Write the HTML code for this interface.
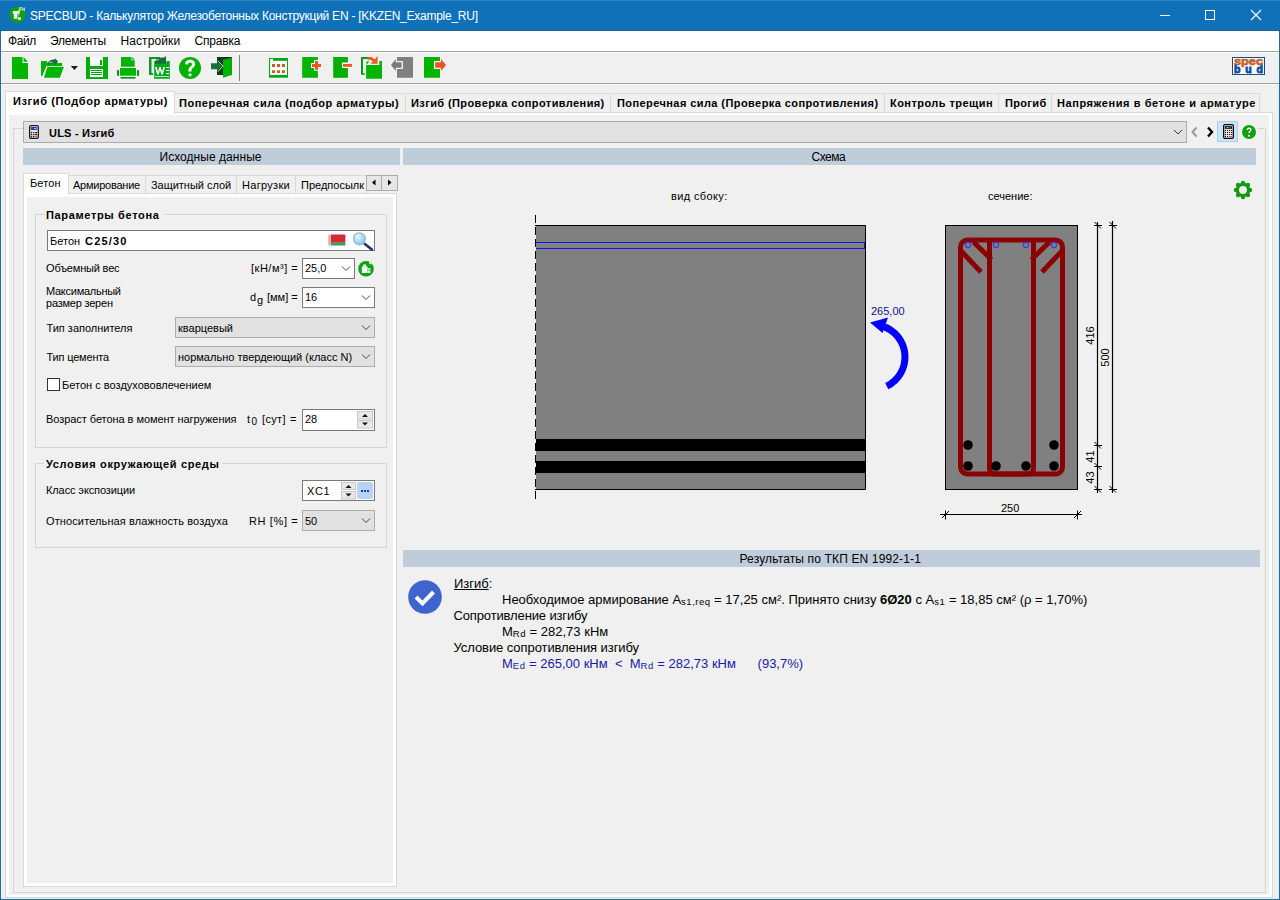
<!DOCTYPE html>
<html><head><meta charset="utf-8"><title>SPECBUD</title>
<style>
html,body{margin:0;padding:0;}
body{width:1280px;height:900px;position:relative;overflow:hidden;background:#f0f0f0;font-family:"Liberation Sans",sans-serif;color:#000;}
.r{position:absolute;}
.t{position:absolute;white-space:pre;}
</style></head><body>
<div class="r" style="left:0px;top:0px;width:1280px;height:900px;background:#f0f0f0;"></div>
<div class="r" style="left:0px;top:0px;width:1280px;height:31px;background:#0f72b9;"></div>
<div class="r" style="left:0px;top:0px;width:1280px;height:1px;background:#2a86c8;"></div>
<div class="r" style="left:0px;top:30px;width:1280px;height:1px;background:#1d5f92;"></div>
<div class="r" style="left:0px;top:31px;width:1px;height:869px;background:#2d6a96;"></div>
<div class="r" style="left:1279px;top:31px;width:1px;height:869px;background:#2d6a96;"></div>
<div class="r" style="left:0px;top:899px;width:1280px;height:1px;background:#2d6a96;"></div>
<div class="r" style="left:1px;top:898px;width:1278px;height:1px;background:#c8f4ff;"></div>
<div class="r" style="left:1px;top:31px;width:1px;height:867px;background:#e6fbff;"></div>
<div class="r" style="left:1278px;top:31px;width:1px;height:867px;background:#c8f4ff;"></div>
<svg class="r" style="left:8px;top:6px" width="19" height="19" viewBox="8 6 19 19">
<circle cx="17.25" cy="14.75" r="8" fill="#10a010"/>
<path d="M12.8 11.1H19.7V13.8H17.2V18.7H13.8V13.8H12.8Z" fill="#f0fff0"/>
<rect x="17.2" y="14" width="2" height="2.5" fill="#8fb08f"/>
<rect x="17.7" y="17.2" width="3.2" height="2.7" fill="#d8f8d8"/>
<path d="M18.6 11.2L20.4 9" stroke="#c8f4c8" stroke-width="1.2"/>
<path d="M19.6 10.8v-3.3h1.8M19.6 9.2h1.5M22.2 10.8v-3.3l2.2 3.3v-3.3" stroke="#b8f0c8" stroke-width="0.9" fill="none"/>
</svg>
<div class="t" style="left:30px;top:10px;font-size:12px;line-height:12px;color:#fff;letter-spacing:-0.250px;">SPECBUD - Калькулятор Железобетонных Конструкций EN - [KKZEN_Example_RU]</div>
<div class="r" style="left:1160px;top:15px;width:10px;height:1px;background:#fff;"></div>
<div class="r" style="left:1205px;top:10px;width:10px;height:10px;border:1px solid #fff;box-sizing:border-box;"></div>
<svg class="r" style="left:1250px;top:9px" width="12" height="12" viewBox="0 0 12 12">
<path d="M1 1L11 11M11 1L1 11" stroke="#fff" stroke-width="1.1"/></svg>
<div class="r" style="left:1px;top:31px;width:1278px;height:20px;background:#fff;"></div>
<div class="r" style="left:1px;top:51px;width:1278px;height:1px;background:#a0a0a0;"></div>
<div class="r" style="left:1px;top:52px;width:1278px;height:1px;background:#fcfcfc;"></div>
<div class="t" style="left:8px;top:35px;font-size:12px;line-height:12px;letter-spacing:-0.405px;">Файл</div>
<div class="t" style="left:50px;top:35px;font-size:12px;line-height:12px;letter-spacing:-0.197px;">Элементы</div>
<div class="t" style="left:120.5px;top:35px;font-size:12px;line-height:12px;letter-spacing:0.095px;">Настройки</div>
<div class="t" style="left:194.5px;top:35px;font-size:12px;line-height:12px;letter-spacing:-0.196px;">Справка</div>
<div class="r" style="left:1px;top:53px;width:1278px;height:30px;background:#f0f0f0;"></div>
<div class="r" style="left:1px;top:83px;width:1278px;height:1px;background:#a0a0a0;"></div>
<div class="r" style="left:1px;top:84px;width:1278px;height:1px;background:#fafafa;"></div>
<svg class="r" style="left:0;top:52px" width="460" height="32" viewBox="0 52 460 32">
<!-- new doc -->
<path d="M12 57h10.5v6h5.5v16h-16z" fill="#00b400"/>
<path d="M23.5 57l4.5 4.8h-4.5z" fill="#00b400"/>
<!-- open folder -->
<path d="M41 61h5.5l1.5 2h14v3h-15.5l-4.3 10h-1.2z" fill="#00b000"/>
<path d="M48 62.5c1.5-2.5 4-3.5 7-3v-1.3l3.2 3.3-3.2 3.6v-1.6c-2.6-0.6-5 0-7 1.5z" fill="#17703a"/>
<path d="M49 62.3h3.5" stroke="#c8f0c8" stroke-width="0.8"/>
<path d="M47.5 66.7h16.5l-4.2 11h-15.8z" fill="#00b400"/>
<path d="M70.8 66h7.2l-3.6 4z" fill="#1a1a1a"/>
<!-- save -->
<path d="M86 57h22v22h-22z" fill="#00b000"/>
<path d="M90 57h13v9h-13z" fill="#fff"/>
<path d="M100 60h2v5h-2z" fill="#00b000"/>
<path d="M90 69h13v8h-13z" fill="#fff"/>
<path d="M91 70h11v1h-11zM91 72h11v1h-11zM91 74h11v1h-11z" fill="#0a9a28"/>
<!-- print -->
<path d="M121 57h10.5l3.2 3.2v6.5h-13.7z" fill="#00b400"/>
<path d="M131.5 57l3.2 3.2h-3.2z" fill="#fff"/>
<path d="M132.2 57.2l2.3 2.3h-2.3z" fill="#00a000"/>
<path d="M120 68h16v7.7h-16z" fill="#00b400"/>
<path d="M117 70h1.8l0.4 5.7h-2.2zM137.3 70h1.8v5.7h-2.2z" fill="#0a8a20"/>
<path d="M120.2 77h15.7l-0.8 1.7h-14.1z" fill="#0a9a20"/>
<!-- word -->
<path d="M149 57h11v2h-8.5v14h1.5v2h-4z" fill="#0a9a20"/>
<path d="M154.2 61h2v1.5h-0.5v0.3h10.8v-1.8h3.3v17.7h-15.6z" fill="#00a820"/>
<path d="M155 62c1-3.5 4-5 9-4.5l2-1.5v7.7h-11z" fill="#17703a"/>
<path d="M156.8 61c0.3-1 1.2-1.6 2.2-1.4" stroke="#e0ffe0" stroke-width="0.7" fill="none"/>
<path d="M155 67.1h1.8l1.2 5 1.3-5h1.5l1.3 5 1.2-5h1.7l-2.1 7.5h-1.6l-1.3-4.8-1.3 4.8h-1.6z" fill="#fff"/>
<path d="M166.2 67h2.7v1h-2.7zM166.2 70h2.7v1h-2.7zM166.2 73h2.7v1h-2.7zM155 76.2h14v0.9h-14z" fill="#fff"/>
<!-- help -->
<circle cx="190" cy="67.9" r="11" fill="#00b000"/>
<path d="M185 64.3c0-2.9 2.2-4.6 5.1-4.6 3 0 5.1 1.8 5.1 4.3 0 3.4-3.7 3.6-3.7 6.6v0.8h-3.1v-1c0-3.9 3.6-4 3.6-6.2 0-1-0.8-1.7-1.9-1.7-1.2 0-2 0.9-2 2.1z" fill="#fff"/>
<path d="M190 72.9l2 1.9-2 1.9-2-1.9z" fill="#fff"/>
<!-- exit -->
<path d="M217 57h14.8v18h-14.8z" fill="#0b3a1c"/>
<path d="M223 59.7l8.8-2v17.3l-8.8 2.7z" fill="#00b400"/>
<path d="M211 63.2h6v-1.5l5 4.5-5 4.5v-1.5h-6z" fill="#17733a"/>
<path d="M217.8 60.8l5.2 5.4-5.2 5.4" fill="none" stroke="#e6ffe6" stroke-width="0.9"/>
<!-- separator -->
<path d="M239 55h1v26h-1z" fill="#808080"/>
<!-- calendar -->
<path d="M269 58h19v19.7h-19z" fill="#00a818"/>
<path d="M270.1 60.8h16.9v14.1h-16.9z" fill="#fff"/>
<path d="M270.1 58.9h2.9v2h-2.9z" fill="#fff"/>
<path d="M272 64.1h3v2.9h-3zM277 64.1h3v2.9h-3zM282 64.1h3v2.9h-3zM272 70.2h3v2.9h-3zM277 70.2h3v2.9h-3zM282 70.2h3v2.9h-3z" fill="#d0582a"/>
<!-- add -->
<path d="M302.2 57H317.9V60H314V63H311V68H314V70.7H317.9V77.7H302.2Z" fill="#00b400"/>
<path d="M315 61h3v3h3v3h-3v2.7h-3v-2.7h-3v-3h3z" fill="#ea5522"/>
<!-- remove -->
<path d="M333.2 57h14.7v20.8h-14.7z" fill="#00b000"/>
<path d="M342 62.5h6v5.5h-6z" fill="#fff"/>
<path d="M343 64h9v2.8h-9z" fill="#e8582a"/>
<!-- copy -->
<path d="M361 57h7v2h-5v14h1.7v1.8h-3.7z" fill="#0a9a20"/>
<path d="M366.1 65H379.3V61.1H382V78.8H366.1Z" fill="#00b400"/>
<path d="M366.5 61.5h3l-3 3z" fill="#0a8a20"/>
<path d="M367.5 57H371.5L374.8 59.3L377.6 56V63.8H370.5L372.8 61.6L370.5 59.8H367.5Z" fill="#ec5a20"/>
<!-- gray -->
<path d="M397 57h16v20.8h-16zM403 61h-6v8h6z" fill="#808080" fill-rule="evenodd"/>
<path d="M391 65l4.7-6v3.2h5.8v5.5h-5.8v3.3z" fill="#7a7a7a"/>
<!-- export -->
<path d="M424 57h16v20.8h-16zM434 61h6v8h-6z" fill="#00b400" fill-rule="evenodd"/>
<path d="M435.2 62.2h5.8v-3.2l5 6-5 6v-3.3h-5.8z" fill="#ec5222"/>
</svg>

<div class="r" style="left:1232px;top:57px;width:33px;height:18px;border:1px solid #1a4e8a;box-sizing:border-box;background:#fff"></div>
<svg class="r" style="left:1232px;top:57px" width="33" height="18" viewBox="0 0 33 18">
<text x="2" y="8.4" textLength="29" lengthAdjust="spacingAndGlyphs" font-family="Liberation Sans" font-weight="700" font-size="11.5" fill="#d86a28" stroke="#b86030" stroke-width="0.7">spec</text>
<text x="2" y="16" textLength="29" lengthAdjust="spacing" font-family="Liberation Sans" font-weight="700" font-size="10.5" fill="#0f4fa0" stroke="#0f4fa0" stroke-width="0.9">bud</text>
</svg>
<div class="r" style="left:5px;top:112px;width:1268px;height:786px;background:#fff;border:1px solid #d9d9d9;box-sizing:border-box;"></div>
<div class="r" style="left:9px;top:115px;width:1260px;height:780px;background:#f0f0f0;"></div>
<div class="r" style="left:174px;top:93px;width:232px;height:20px;background:#f0f0f0;border:1px solid #d9d9d9;box-sizing:border-box;"></div>
<div class="r" style="left:405px;top:93px;width:206px;height:20px;background:#f0f0f0;border:1px solid #d9d9d9;box-sizing:border-box;"></div>
<div class="r" style="left:610px;top:93px;width:275px;height:20px;background:#f0f0f0;border:1px solid #d9d9d9;box-sizing:border-box;"></div>
<div class="r" style="left:884px;top:93px;width:115px;height:20px;background:#f0f0f0;border:1px solid #d9d9d9;box-sizing:border-box;"></div>
<div class="r" style="left:998px;top:93px;width:54px;height:20px;background:#f0f0f0;border:1px solid #d9d9d9;box-sizing:border-box;"></div>
<div class="r" style="left:1051px;top:93px;width:209px;height:20px;background:#f0f0f0;border:1px solid #d9d9d9;box-sizing:border-box;"></div>
<div class="r" style="left:5px;top:91px;width:170px;height:23px;background:#fff;border:1px solid #d9d9d9;box-sizing:border-box;border-bottom:none;"></div>
<div class="t" style="left:13px;top:96px;font-size:11px;line-height:11px;font-weight:700;letter-spacing:0.604px;">Изгиб (Подбор арматуры)</div>
<div class="t" style="left:179px;top:98px;font-size:11px;line-height:11px;font-weight:700;letter-spacing:0.522px;">Поперечная сила (подбор арматуры)</div>
<div class="t" style="left:411px;top:98px;font-size:11px;line-height:11px;font-weight:700;letter-spacing:0.404px;">Изгиб (Проверка сопротивления)</div>
<div class="t" style="left:617px;top:98px;font-size:11px;line-height:11px;font-weight:700;letter-spacing:0.422px;">Поперечная сила (Проверка сопротивления)</div>
<div class="t" style="left:890px;top:98px;font-size:11px;line-height:11px;font-weight:700;letter-spacing:0.453px;">Контроль трещин</div>
<div class="t" style="left:1005px;top:98px;font-size:11px;line-height:11px;font-weight:700;letter-spacing:0.343px;">Прогиб</div>
<div class="t" style="left:1057px;top:98px;font-size:11px;line-height:11px;font-weight:700;letter-spacing:0.575px;">Напряжения в бетоне и арматуре</div>
<div class="r" style="left:13px;top:128px;width:1253px;height:765px;border:1px solid #d5d5d5;box-sizing:border-box;"></div>
<div class="r" style="left:1187px;top:127px;width:71px;height:3px;background:#f0f0f0;"></div>
<div class="r" style="left:23px;top:121px;width:1164px;height:22px;background:#e1e1e1;border:1px solid #adadad;box-sizing:border-box;"></div>
<div class="t" style="left:49px;top:128px;font-size:11px;line-height:11px;font-weight:700;letter-spacing:0.210px;">ULS - Изгиб</div>
<svg class="r" style="left:1170px;top:126px" width="16" height="12" viewBox="0 0 16 12">
<path d="M4 4l4 4 4-4" fill="none" stroke="#333" stroke-width="1"/></svg>
<svg class="r" style="left:29px;top:125px" width="10" height="14" viewBox="0 0 10 14">
<rect x="0.65" y="0.65" width="8.7" height="12.7" rx="1.3" fill="#e6e6e6" stroke="#1a1a1a" stroke-width="1.3"/>
<rect x="2" y="2" width="5.8" height="3" fill="#3636c0"/>
<rect x="5" y="3" width="2" height="1" fill="#8cf"/>
<path d="M2 7h1.2v1.2h-1.2zM4.2 7h1.2v1.2h-1.2zM6.2 7h1.8v1.2h-1.8zM2 9h1.2v1.2h-1.2zM4.2 9h1.2v1.2h-1.2zM6.2 9h1.8v1.2h-1.8zM2 11h1.2v1.2h-1.2zM4.2 11h1.2v1.2h-1.2z" fill="#111"/>
<rect x="6.2" y="11" width="1.8" height="1.2" fill="#d04060"/>
</svg>
<svg class="r" style="left:1188px;top:124px" width="50" height="16" viewBox="0 0 50 16">
<path d="M8.5 3.5l-4 4.5 4 4.5" fill="none" stroke="#999" stroke-width="2"/>
<path d="M20 3.5l4 4.5-4 4.5" fill="none" stroke="#000" stroke-width="2.4"/>
</svg>
<div class="r" style="left:1217px;top:121px;width:21px;height:21px;background:#cce4f7;border:1px solid #a6d2f5;box-sizing:border-box;"></div>
<svg class="r" style="left:1223px;top:124px" width="11" height="15" viewBox="0 0 11 15">
<rect x="0.65" y="0.65" width="9.7" height="13.7" rx="1.3" fill="#e8e0e0" stroke="#0a0a0a" stroke-width="1.3"/>
<rect x="2" y="2.2" width="7" height="2.6" fill="#0a0a0a"/>
<rect x="3.5" y="3" width="2" height="1" fill="#6cc"/><rect x="6.5" y="3" width="1" height="1" fill="#6cc"/>
<path d="M2 6h1v1h-1zM4 6h1v1h-1zM6 6h1v1h-1zM8 6h1v1h-1zM2 8h1v1h-1zM4 8h1v1h-1zM6 8h1v1h-1zM8 8h1v1h-1zM2 10h1v1h-1zM4 10h1v1h-1zM6 10h1v1h-1zM8 10h1v1h-1zM2 12h1v1h-1zM4 12h1v1h-1z" fill="#111"/>
<rect x="6" y="12" width="3" height="1" fill="#e05070"/>
</svg>
<svg class="r" style="left:1242px;top:125px" width="14" height="14" viewBox="0 0 14 14">
<circle cx="7" cy="7" r="7" fill="#0ea00e"/>
<path d="M4.6 5c0-1.6 1.1-2.5 2.5-2.5 1.5 0 2.5 0.9 2.5 2.2 0 1.8-1.9 1.9-1.9 3.4h-1.4c0-2 1.8-2.2 1.8-3.2 0-0.6-0.4-1-1-1-0.7 0-1.1 0.5-1.1 1.1z" fill="#fff"/>
<circle cx="7" cy="10.7" r="0.95" fill="#fff"/>
</svg>
<div class="r" style="left:23px;top:148px;width:377px;height:17px;background:#bfcddb;"></div>
<div class="t" style="left:159.5px;top:151px;font-size:12px;line-height:12px;letter-spacing:0.044px;">Исходные данные</div>
<div class="r" style="left:403px;top:148px;width:853px;height:17px;background:#bfcddb;"></div>
<div class="t" style="left:811.5px;top:151px;font-size:12px;line-height:12px;letter-spacing:-0.510px;">Схема</div>
<div class="r" style="left:403px;top:550px;width:857px;height:17px;background:#bfcddb;"></div>
<div class="t" style="left:739.5px;top:553px;font-size:12px;line-height:12px;letter-spacing:0.144px;">Результаты по ТКП EN 1992-1-1</div>
<div class="r" style="left:23px;top:193px;width:374px;height:694px;background:#fff;border:1px solid #d9d9d9;box-sizing:border-box;"></div>
<div class="r" style="left:27px;top:197px;width:366px;height:686px;background:#f0f0f0;"></div>
<div class="r" style="left:68px;top:175px;width:78px;height:19px;background:#f0f0f0;border:1px solid #d9d9d9;box-sizing:border-box;"></div>
<div class="r" style="left:145px;top:175px;width:92px;height:19px;background:#f0f0f0;border:1px solid #d9d9d9;box-sizing:border-box;"></div>
<div class="r" style="left:236px;top:175px;width:60px;height:19px;background:#f0f0f0;border:1px solid #d9d9d9;box-sizing:border-box;"></div>
<div class="r" style="left:295px;top:175px;width:72px;height:19px;background:#f0f0f0;border:1px solid #d9d9d9;box-sizing:border-box;"></div>
<div class="r" style="left:23px;top:173px;width:46px;height:22px;background:#fff;border:1px solid #d9d9d9;box-sizing:border-box;border-bottom:none;"></div>
<div class="t" style="left:30px;top:178px;font-size:11px;line-height:11px;letter-spacing:0.105px;">Бетон</div>
<div class="t" style="left:73px;top:180px;font-size:11px;line-height:11px;letter-spacing:-0.238px;">Армирование</div>
<div class="t" style="left:151px;top:180px;font-size:11px;line-height:11px;letter-spacing:-0.024px;">Защитный слой</div>
<div class="t" style="left:242px;top:180px;font-size:11px;line-height:11px;letter-spacing:0.303px;">Нагрузки</div>
<div class="r" style="left:296px;top:176px;width:70px;height:17px;overflow:hidden"><div class="t" style="left:5px;top:4px;font-size:11px;line-height:11px">Предпосылк</div></div>
<div class="r" style="left:366px;top:175px;width:16px;height:16px;background:#e6e6e6;border:1px solid #adadad;box-sizing:border-box;"></div>
<div class="r" style="left:381px;top:175px;width:17px;height:16px;background:#e6e6e6;border:1px solid #adadad;box-sizing:border-box;"></div>
<svg class="r" style="left:366px;top:175px" width="32" height="16" viewBox="0 0 32 16"><path d="M9.5 4.5v6l-3.5-3z" fill="#000"/><path d="M22 4.5v6l3.5-3z" fill="#000"/></svg>
<div class="r" style="left:35px;top:214px;width:352px;height:234px;border:1px solid #d5d5d5;box-sizing:border-box;"></div>
<div class="r" style="left:44px;top:208px;width:120px;height:12px;background:#f0f0f0;"></div>
<div class="t" style="left:46px;top:210px;font-size:11px;line-height:11px;font-weight:700;letter-spacing:0.658px;">Параметры бетона</div>
<div class="r" style="left:35px;top:463px;width:352px;height:85px;border:1px solid #d5d5d5;box-sizing:border-box;"></div>
<div class="r" style="left:44px;top:457px;width:178px;height:12px;background:#f0f0f0;"></div>
<div class="t" style="left:46px;top:459px;font-size:11px;line-height:11px;font-weight:700;letter-spacing:0.653px;">Условия окружающей среды</div>
<div class="r" style="left:47px;top:230px;width:328px;height:21px;background:#fff;border:1px solid #7a7a7a;box-sizing:border-box;"></div>
<div class="t" style="left:50px;top:236px;font-size:11px;line-height:11px;">Бетон</div>
<div class="t" style="left:85px;top:236px;font-size:11px;line-height:11px;font-weight:700;letter-spacing:1.203px;">C25/30</div>
<svg class="r" style="left:326px;top:230px" width="48" height="21" viewBox="326 230 48 21">
<defs><radialGradient id="lg" cx="0.4" cy="0.35" r="0.7"><stop offset="0" stop-color="#e4f4ff"/><stop offset="1" stop-color="#7ec0ee"/></radialGradient></defs>
<rect x="328.2" y="234.6" width="17.1" height="10.8" fill="#e8b0b0"/>
<rect x="331" y="234.6" width="14.3" height="7.5" fill="#d42a36"/>
<rect x="331" y="242.1" width="14.3" height="3.3" fill="#4c9a54"/>
<path d="M364.6 243.8L371.8 249.6" stroke="#1c3566" stroke-width="2.6" stroke-linecap="round"/>
<circle cx="359.4" cy="238.8" r="6" fill="url(#lg)" stroke="#a8b8c8" stroke-width="1.3"/>
<path d="M356 237c0.6-1.6 1.8-2.4 3.2-2.6" stroke="#fff" stroke-width="1" fill="none"/>
</svg>
<div class="t" style="left:46px;top:263px;font-size:11px;line-height:11px;letter-spacing:-0.180px;">Объемный вес</div>
<div class="t" style="left:251px;top:263px;font-size:11px;line-height:11px;letter-spacing:0.507px;">[кН/м³] =</div>
<div class="r" style="left:302px;top:258px;width:53px;height:21px;background:#fff;border:1px solid #7a7a7a;box-sizing:border-box;"></div>
<div class="t" style="left:305px;top:263px;font-size:11px;line-height:11px;">25,0</div>
<svg class="r" style="left:341px;top:266px" width="10" height="6" viewBox="0 0 10 6"><path d="M1 0.5l4 4 4-4" fill="none" stroke="#444" stroke-width="1"/></svg>
<svg class="r" style="left:357px;top:260px" width="18" height="18" viewBox="357 260 18 18">
<circle cx="366" cy="268.8" r="7.8" fill="#12a012"/>
<path d="M361.8 266.4h1.4v-2h3v2h1.3v6.6h-5.7z" fill="#f2fff2"/>
<rect x="367.8" y="268.2" width="2.6" height="4.8" fill="#e0f6e0"/>
<rect x="368.6" y="269.5" width="1.2" height="1.5" fill="#5a9a5a"/>
<path d="M369.5 264.2v-2.2l1.2 2.2v-2.2M371.7 264.2v-2.2l1.3 2.2v-2.2" stroke="#d8ffd8" stroke-width="0.7" fill="none"/>
</svg>
<div class="t" style="left:46px;top:286px;font-size:11px;line-height:11px;letter-spacing:-0.268px;">Максимальный</div>
<div class="t" style="left:46px;top:298px;font-size:11px;line-height:11px;letter-spacing:-0.214px;">размер зерен</div>
<div class="t" style="left:250px;top:292px;font-size:11px;line-height:11px;">d</div>
<div class="t" style="left:257px;top:295px;font-size:11px;line-height:11px;">g</div>
<div class="t" style="left:267px;top:292px;font-size:11px;line-height:11px;">[мм] =</div>
<div class="r" style="left:302px;top:287px;width:73px;height:21px;background:#fff;border:1px solid #7a7a7a;box-sizing:border-box;"></div>
<div class="t" style="left:305px;top:292px;font-size:11px;line-height:11px;">16</div>
<svg class="r" style="left:361px;top:295px" width="10" height="6" viewBox="0 0 10 6"><path d="M1 0.5l4 4 4-4" fill="none" stroke="#444" stroke-width="1"/></svg>
<div class="t" style="left:46.5px;top:323px;font-size:11px;line-height:11px;letter-spacing:-0.006px;">Тип заполнителя</div>
<div class="r" style="left:175px;top:317px;width:200px;height:21px;background:#e1e1e1;border:1px solid #adadad;box-sizing:border-box;"></div>
<div class="t" style="left:178px;top:323px;font-size:11px;line-height:11px;">кварцевый</div>
<svg class="r" style="left:361px;top:325px" width="10" height="6" viewBox="0 0 10 6"><path d="M1 0.5l4 4 4-4" fill="none" stroke="#444" stroke-width="1"/></svg>
<div class="t" style="left:46.5px;top:352px;font-size:11px;line-height:11px;letter-spacing:-0.178px;">Тип цемента</div>
<div class="r" style="left:175px;top:346px;width:200px;height:21px;background:#e1e1e1;border:1px solid #adadad;box-sizing:border-box;"></div>
<div class="t" style="left:178px;top:352px;font-size:11px;line-height:11px;">нормально твердеющий (класс N)</div>
<svg class="r" style="left:361px;top:354px" width="10" height="6" viewBox="0 0 10 6"><path d="M1 0.5l4 4 4-4" fill="none" stroke="#444" stroke-width="1"/></svg>
<div class="r" style="left:47px;top:378px;width:13px;height:13px;background:#fff;border:1px solid #333;box-sizing:border-box;"></div>
<div class="t" style="left:62px;top:380px;font-size:11px;line-height:11px;letter-spacing:0.017px;">Бетон с воздухововлечением</div>
<div class="t" style="left:46px;top:414px;font-size:11px;line-height:11px;letter-spacing:-0.055px;">Возраст бетона в момент нагружения</div>
<div class="t" style="left:247px;top:414px;font-size:11px;line-height:11px;">t</div>
<div class="t" style="left:251.5px;top:417px;font-size:10px;line-height:10px;">0</div>
<div class="t" style="left:262px;top:414px;font-size:11px;line-height:11px;letter-spacing:0.336px;">[сут]</div>
<div class="t" style="left:290px;top:414px;font-size:11px;line-height:11px;">=</div>
<div class="r" style="left:302px;top:409px;width:73px;height:22px;background:#fff;border:1px solid #7a7a7a;box-sizing:border-box;"></div>
<div class="t" style="left:305px;top:414px;font-size:11px;line-height:11px;">28</div>
<svg class="r" style="left:357px;top:411px" width="16" height="18" viewBox="0 0 16 18">
<rect x="0.5" y="0.5" width="15" height="7.5" fill="#e8e8e8" stroke="#c8c8c8"/>
<rect x="0.5" y="9.5" width="15" height="7.5" fill="#e8e8e8" stroke="#c8c8c8"/>
<path d="M5 6h6l-3-3z" fill="#111"/>
<path d="M5 11.5h6l-3 3z" fill="#111"/>
</svg>
<div class="t" style="left:46px;top:485px;font-size:11px;line-height:11px;letter-spacing:-0.105px;">Класс экспозиции</div>
<div class="r" style="left:302px;top:480px;width:73px;height:21px;background:#fff;border:1px solid #7a7a7a;box-sizing:border-box;"></div>
<div class="t" style="left:307px;top:486px;font-size:11px;line-height:11px;letter-spacing:0.6px;">XC1</div>
<svg class="r" style="left:341px;top:482px" width="33" height="18" viewBox="0 0 33 18">
<rect x="0.5" y="0.5" width="14" height="7" fill="#e8e8e8" stroke="#c8c8c8"/>
<rect x="0.5" y="9.5" width="14" height="7.5" fill="#e8e8e8" stroke="#c8c8c8"/>
<path d="M4.5 6h6l-3-3z" fill="#111"/>
<path d="M4.5 11.5h6l-3 3z" fill="#111"/>
<rect x="16" y="0" width="16" height="17" rx="2" fill="#b9d3f7"/>
<path d="M20 8h2v2h-2zM23 8h2v2h-2zM26 8h2v2h-2z" fill="#1a3ea8"/>
</svg>
<div class="t" style="left:46px;top:516px;font-size:11px;line-height:11px;letter-spacing:0.117px;">Относительная влажность воздуха</div>
<div class="t" style="left:249px;top:516px;font-size:11px;line-height:11px;letter-spacing:0.639px;">RH [%] =</div>
<div class="r" style="left:302px;top:510px;width:73px;height:21px;background:#e1e1e1;border:1px solid #adadad;box-sizing:border-box;"></div>
<div class="t" style="left:305px;top:516px;font-size:11px;line-height:11px;">50</div>
<svg class="r" style="left:361px;top:518px" width="10" height="6" viewBox="0 0 10 6"><path d="M1 0.5l4 4 4-4" fill="none" stroke="#444" stroke-width="1"/></svg>
<div class="t" style="left:671px;top:191px;font-size:11px;line-height:11px;letter-spacing:0.369px;">вид сбоку:</div>
<div class="t" style="left:988px;top:191px;font-size:11px;line-height:11px;">сечение:</div>
<svg class="r" style="left:0;top:0" width="1280" height="900" viewBox="0 0 1280 900">
<rect x="536" y="226" width="329" height="263" fill="#808080"/><path d="M535 225.5H865.5V489.5H535" fill="none" stroke="#000" stroke-width="1"/>
<rect x="535.5" y="242.5" width="329" height="6" fill="none" stroke="#1a1aa0" stroke-width="1"/>
<path d="M536 243.5H864M536 249.5H864" stroke="#7a7ad8" stroke-width="1"/>
<rect x="535" y="439" width="331" height="12" fill="#000"/>
<rect x="535" y="461" width="331" height="12" fill="#000"/>
<path d="M535.5 226V489" stroke="#f4f4f4" stroke-width="1"/><path d="M535.5 215V499" stroke="#000" stroke-width="1" stroke-dasharray="8 4"/>
<path d="M535.5 215V499" stroke="#f0f0f0" stroke-width="0" />
<path d="M886.75 386.21A32.5 32.5 0 0 0 882.54 326.09" fill="none" stroke="#0000ff" stroke-width="7"/>
<path d="M870 322.5L888 317.5L882.5 333z" fill="#0000ff"/>
<rect x="945.5" y="225.5" width="132" height="264" fill="#808080" stroke="#000" stroke-width="1"/>
<rect x="960.5" y="240" width="102" height="234" rx="7" ry="7" fill="none" stroke="#8a0000" stroke-width="5"/>
<path d="M989.5 240V468Q989.5 474 995.5 474H1027.5Q1033.5 474 1033.5 468V240" fill="none" stroke="#8a0000" stroke-width="5"/>
<path d="M961.5 251.5L981 272M973.5 242L991.5 259.5M1061.5 251.5L1042 272M1049.5 242L1031.5 259.5" fill="none" stroke="#8a0000" stroke-width="5"/>
<circle cx="968" cy="245" r="2.6" fill="none" stroke="#3a3ae8" stroke-width="1.1"/>
<circle cx="996" cy="245" r="2.6" fill="none" stroke="#3a3ae8" stroke-width="1.1"/>
<circle cx="1026" cy="245" r="2.6" fill="none" stroke="#3a3ae8" stroke-width="1.1"/>
<circle cx="1054" cy="245" r="2.6" fill="none" stroke="#3a3ae8" stroke-width="1.1"/>
<circle cx="968" cy="445" r="4.8" fill="#000"/>
<circle cx="968" cy="466" r="4.8" fill="#000"/>
<circle cx="996" cy="466" r="4.8" fill="#000"/>
<circle cx="1026" cy="466" r="4.8" fill="#000"/>
<circle cx="1054" cy="466" r="4.8" fill="#000"/>
<circle cx="1054" cy="445" r="4.8" fill="#000"/>
<path d="M1097.5 222V493M1112.5 221V493M940 514.5H1082" stroke="#000" stroke-width="1.2"/>
<path d="M1094.0 225.5H1102.0M1094.5 222.0L1101.0 228.5" stroke="#000" stroke-width="1"/>
<path d="M1094.0 445.5H1102.0M1094.5 442.0L1101.0 448.5" stroke="#000" stroke-width="1"/>
<path d="M1094.0 466.5H1102.0M1094.5 463.0L1101.0 469.5" stroke="#000" stroke-width="1"/>
<path d="M1094.0 489.5H1102.0M1094.5 486.0L1101.0 492.5" stroke="#000" stroke-width="1"/>
<path d="M1109.0 225.5H1117.0M1109.5 222.0L1116.0 228.5" stroke="#000" stroke-width="1"/>
<path d="M1109.0 489.5H1117.0M1109.5 486.0L1116.0 492.5" stroke="#000" stroke-width="1"/>
<path d="M945.5 510.5V519.5M942.0 518.0L949.0 511.0" stroke="#000" stroke-width="1"/>
<path d="M1077.5 510.5V519.5M1074.0 518.0L1081.0 511.0" stroke="#000" stroke-width="1"/>
<circle cx="1250.00" cy="190.00" r="2.2" fill="#109a10"/><circle cx="1247.95" cy="194.95" r="2.2" fill="#109a10"/><circle cx="1243.00" cy="197.00" r="2.2" fill="#109a10"/><circle cx="1238.05" cy="194.95" r="2.2" fill="#109a10"/><circle cx="1236.00" cy="190.00" r="2.2" fill="#109a10"/><circle cx="1238.05" cy="185.05" r="2.2" fill="#109a10"/><circle cx="1243.00" cy="183.00" r="2.2" fill="#109a10"/><circle cx="1247.95" cy="185.05" r="2.2" fill="#109a10"/>
<circle cx="1243" cy="190" r="5.6" fill="none" stroke="#109a10" stroke-width="3.2"/>
<circle cx="425" cy="597" r="16.8" fill="#3f63cf"/>
<path d="M416 597L422.5 603.5L433.5 592" fill="none" stroke="#fff" stroke-width="4"/>
</svg>
<div class="t" style="left:1070px;top:329.5px;width:40px;text-align:center;font-size:11px;line-height:11px;transform:rotate(-90deg)">416</div>
<div class="t" style="left:1085px;top:351.5px;width:40px;text-align:center;font-size:11px;line-height:11px;transform:rotate(-90deg)">500</div>
<div class="t" style="left:1070px;top:450.5px;width:40px;text-align:center;font-size:11px;line-height:11px;transform:rotate(-90deg)">41</div>
<div class="t" style="left:1070px;top:471.5px;width:40px;text-align:center;font-size:11px;line-height:11px;transform:rotate(-90deg)">43</div>
<div class="t" style="left:1001px;top:503px;font-size:11px;line-height:11px;">250</div>
<div class="t" style="left:871px;top:306px;font-size:11px;line-height:11px;color:#101088;">265,00</div>
<div class="t" style="left:454px;top:577px;font-size:13px;line-height:13px;"><u>Изгиб</u>:</div>
<div class="t" style="left:502px;top:593px;font-size:13px;line-height:13px;">Необходимое армирование A<span style="font-size:9.5px;letter-spacing:0.5px;position:relative;top:1px">s1,req</span> = 17,25 см². Принято снизу <b>6Ø20</b> с A<span style="font-size:9.5px;letter-spacing:0.5px;position:relative;top:1px">s1</span> = 18,85 см² (ρ = 1,70%)</div>
<div class="t" style="left:453.5px;top:609px;font-size:13px;line-height:13px;letter-spacing:-0.134px;">Сопротивление изгибу</div>
<div class="t" style="left:502px;top:625px;font-size:13px;line-height:13px;">M<span style="font-size:9.5px;letter-spacing:0.5px;position:relative;top:1px">Rd</span> = 282,73 кНм</div>
<div class="t" style="left:453.5px;top:641px;font-size:13px;line-height:13px;letter-spacing:-0.073px;">Условие сопротивления изгибу</div>
<div class="t" style="left:502px;top:657px;font-size:13px;line-height:13px;color:#1a1aa6;">M<span style="font-size:9.5px;letter-spacing:0.5px;position:relative;top:1px">Ed</span> = 265,00 кНм  &lt;  M<span style="font-size:9.5px;letter-spacing:0.5px;position:relative;top:1px">Rd</span> = 282,73 кНм      (93,7%)</div>
</body></html>
